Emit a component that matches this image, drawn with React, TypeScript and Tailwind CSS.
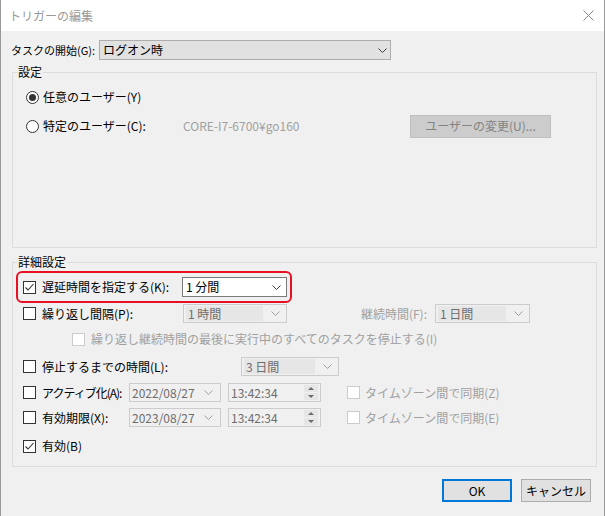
import type { ReactNode } from "react";

const font = "font-['Noto_Sans_CJK_JP','Noto_Sans',sans-serif]";

function Chevron({ color = "#404040" }: { color?: string }) {
  return (
    <svg width="9" height="5" viewBox="0 0 9 5" className="shrink-0">
      <polyline points="0.5,0.5 4.5,4.5 8.5,0.5" fill="none" stroke={color} strokeWidth="1" />
    </svg>
  );
}

function Checkbox({ checked, disabled }: { checked?: boolean; disabled?: boolean }) {
  return (
    <span
      className={`flex h-[13px] w-[13px] shrink-0 items-center justify-center border bg-white ${
        disabled ? "border-[#cccccc]" : "border-[#333333]"
      }`}
    >
      {checked && (
        <svg width="11" height="11" viewBox="0 0 11 11">
          <polyline points="1.5,5.5 4,8 9.5,2" fill="none" stroke="#333" strokeWidth="1.1" />
        </svg>
      )}
    </span>
  );
}

function Radio({ checked }: { checked?: boolean }) {
  return (
    <span className="flex h-[13px] w-[13px] shrink-0 items-center justify-center rounded-full border border-[#333333] bg-white">
      {checked && <span className="h-[7px] w-[7px] rounded-full bg-[#333333]" />}
    </span>
  );
}

function DisabledCombo({ value, width }: { value: string; width: string }) {
  return (
    <div className={`flex h-[19px] shrink-0 items-center border border-[#cccccc] bg-[#f0f0f0] pl-[2px] pr-[6px] ${width}`}>
      <div className="flex h-[15px] flex-1 items-center bg-[#e6e6e6] pl-[2px] text-[#6d6d6d]">{value}</div>
      <div className="ml-[8px]">
        <Chevron color="#a0a0a0" />
      </div>
    </div>
  );
}

function DateBox({ value }: { value: string }) {
  return (
    <div className="flex h-[19px] w-[92px] shrink-0 items-center justify-between border border-[#cccccc] pl-[2px] pr-[7px] text-[#6d6d6d]">
      <span>{value}</span>
      <Chevron color="#a0a0a0" />
    </div>
  );
}

function TimeBox({ value }: { value: string }) {
  return (
    <div className="flex h-[19px] w-[93px] shrink-0 items-center justify-between border border-[#cccccc] pl-[2px] pr-[2px] text-[#6d6d6d]">
      <span>{value}</span>
      <svg width="14" height="15" viewBox="0 0 14 15">
        <rect x="0" y="0" width="14" height="15" fill="#e6e6e6" />
        <line x1="0" y1="7.5" x2="14" y2="7.5" stroke="#f0f0f0" />
        <polygon points="4,5 7,2 10,5" fill="#6d6d6d" />
        <polygon points="4,10 7,13 10,10" fill="#6d6d6d" />
      </svg>
    </div>
  );
}

function Group({ title, className, children }: { title: string; className: string; children: ReactNode }) {
  return (
    <fieldset className={`ml-[11px] w-[585px] border border-[#dcdcdc] ${className}`}>
      <legend className="ml-[4px] px-[1px] leading-[16px]">{title}</legend>
      {children}
    </fieldset>
  );
}

export default function App() {
  return (
    <div className={`h-[516px] w-[606px] overflow-hidden whitespace-nowrap bg-white text-[12px] leading-[16px] text-black ${font}`}>
      <div className="flex h-[516px] w-[605px] flex-col border-r border-l border-[#9a9a9a]">
        <div className="flex h-[31px] shrink-0 items-center justify-between bg-white pl-[8px] pr-[10px]">
          <span className="text-[#999999]">トリガーの編集</span>
          <svg width="11" height="11" viewBox="0 0 11 11">
            <path d="M0.5 0.5 L10.5 10.5 M10.5 0.5 L0.5 10.5" stroke="#888" strokeWidth="1" />
          </svg>
        </div>

        <div className="flex-1 bg-[#f0f0f0]">
          <div className="mt-[9px] flex h-[20px] items-center pl-[10px]">
            <span className="w-[88px] shrink-0 text-[11px]">タスクの開始(G):</span>
            <div className="flex h-[20px] w-[292px] items-center justify-between border border-[#adadad] bg-[#e1e1e1] pl-[3px] pr-[3px]">
              <span>ログオン時</span>
              <Chevron />
            </div>
          </div>

          <Group title="設定" className="mt-[4px] h-[184px]">
            <div className="mt-[9px] flex h-[16px] items-center pl-[13px]">
              <Radio checked />
              <span className="ml-[4px]">任意のユーザー(Y)</span>
            </div>
            <div className="mt-[9px] flex h-[24px] items-center pl-[13px]">
              <Radio />
              <span className="ml-[4px] w-[140px] shrink-0">特定のユーザー(C):</span>
              <span className="w-[227px] shrink-0 text-[#a0a0a0]">CORE-I7-6700¥go160</span>
              <div className="flex h-[23px] w-[141px] items-center justify-center border border-[#bfbfbf] bg-[#cccccc] text-[#838383]">
                ユーザーの変更(U)...
              </div>
            </div>
          </Group>

          <Group title="詳細設定" className="mt-[6px] h-[213px]">
            <div className="mt-[1px] ml-[3px] flex h-[32px] w-[276px] items-center rounded-[6px] border-2 border-[#e81123] pl-[5px]">
              <Checkbox checked />
              <span className="ml-[6px] w-[140px] shrink-0">遅延時間を指定する(K):</span>
              <div className="flex h-[20px] w-[105px] items-center justify-between border border-[#7a7a7a] bg-white pl-[3px] pr-[5px]">
                <span>1 分間</span>
                <Chevron />
              </div>
            </div>

            <div className="mt-[1px] flex h-[19px] items-center pl-[10px]">
              <Checkbox />
              <span className="ml-[6px] w-[141px] shrink-0">繰り返し間隔(P):</span>
              <DisabledCombo value="1 時間" width="w-[104px]" />
              <span className="w-[140px] shrink-0 text-right text-[#a0a0a0]">継続時間(F):</span>
              <div className="ml-[8px]">
                <DisabledCombo value="1 日間" width="w-[95px]" />
              </div>
            </div>

            <div className="mt-[8px] flex h-[16px] items-center pl-[59px]">
              <Checkbox disabled />
              <span className="ml-[6px] text-[#a0a0a0]">繰り返し継続時間の最後に実行中のすべてのタスクを停止する(I)</span>
            </div>

            <div className="mt-[10px] flex h-[19px] items-center pl-[10px]">
              <Checkbox />
              <span className="ml-[6px] w-[199px] shrink-0">停止するまでの時間(L):</span>
              <DisabledCombo value="3 日間" width="w-[98px]" />
            </div>

            <div className="mt-[7px] flex h-[19px] items-center pl-[10px]">
              <Checkbox />
              <span className="ml-[6px] w-[87px] shrink-0 tracking-[-1px]">アクティブ化(A):</span>
              <DateBox value="2022/08/27" />
              <div className="ml-[7px]">
                <TimeBox value="13:42:34" />
              </div>
              <div className="ml-[26px]">
                <Checkbox disabled />
              </div>
              <span className="ml-[5px] text-[#a0a0a0]">タイムゾーン間で同期(Z)</span>
            </div>

            <div className="mt-[6px] flex h-[19px] items-center pl-[10px]">
              <Checkbox />
              <span className="ml-[6px] w-[87px] shrink-0">有効期限(X):</span>
              <DateBox value="2023/08/27" />
              <div className="ml-[7px]">
                <TimeBox value="13:42:34" />
              </div>
              <div className="ml-[26px]">
                <Checkbox disabled />
              </div>
              <span className="ml-[5px] text-[#a0a0a0]">タイムゾーン間で同期(E)</span>
            </div>

            <div className="mt-[11px] flex h-[16px] items-center pl-[10px]">
              <Checkbox checked />
              <span className="ml-[6px]">有効(B)</span>
            </div>
          </Group>

          <div className="mt-[12px] flex justify-end gap-[9px] pr-[13px]">
            <button className="flex h-[23px] w-[70px] items-center justify-center border-2 border-[#0078d7] bg-[#e1e1e1]">
              OK
            </button>
            <button className="flex h-[23px] w-[70px] items-center justify-center border border-[#adadad] bg-[#e1e1e1]">
              キャンセル
            </button>
          </div>
        </div>
      </div>
    </div>
  );
}
